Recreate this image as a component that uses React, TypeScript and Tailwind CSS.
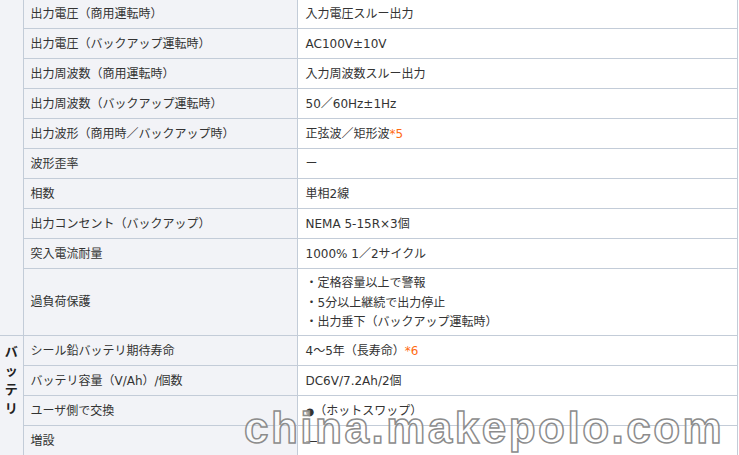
const font = "font-['DejaVu_Sans','Noto_Sans_CJK_JP',sans-serif]";

type Row = { label: string; value: React.ReactNode; tall?: boolean };

const Note = ({ n }: { n: string }) => <span className="text-[#ff6a13]">*{n}</span>;

const powerRows: Row[] = [
  { label: "出力電圧（商用運転時）", value: "入力電圧スルー出力" },
  { label: "出力電圧（バックアップ運転時）", value: "AC100V±10V" },
  { label: "出力周波数（商用運転時）", value: "入力周波数スルー出力" },
  { label: "出力周波数（バックアップ運転時）", value: "50／60Hz±1Hz" },
  { label: "出力波形（商用時／バックアップ時）", value: <>正弦波／矩形波<Note n="5" /></> },
  { label: "波形歪率", value: "ー" },
  { label: "相数", value: "単相2線" },
  { label: "出力コンセント（バックアップ）", value: "NEMA 5-15R×3個" },
  { label: "突入電流耐量", value: "1000% 1／2サイクル" },
  {
    label: "過負荷保護",
    tall: true,
    value: (
      <div className="pt-[3px] leading-[19.5px]">
        <div>・定格容量以上で警報</div>
        <div>・5分以上継続で出力停止</div>
        <div>・出力垂下（バックアップ運転時）</div>
      </div>
    ),
  },
];

const batteryRows: Row[] = [
  { label: "シール鉛バッテリ期待寿命", value: <>4～5年（長寿命）<Note n="6" /></> },
  { label: "バッテリ容量（V/Ah）/個数", value: "DC6V/7.2Ah/2個" },
  { label: "ユーザ側で交換", value: <><span className="text-[10px]">●</span>（ホットスワップ）</> },
  { label: "増設", value: "—" },
];

const cell = "border border-[#c3ccd8] px-[7px] align-middle";

export default function App() {
  return (
    <div className={`relative h-[455px] w-[739px] overflow-hidden bg-white text-[12px] text-[#333] ${font}`}>
      <table className="-mt-[2px] w-[738px] table-fixed border-collapse">
        <colgroup>
          <col className="w-[23px]" />
          <col className="w-[274px]" />
          <col />
        </colgroup>
        <tbody>
          {powerRows.map((r, i) => (
            <tr key={r.label} className={r.tall ? "h-[67px]" : "h-[30px]"}>
              {i === 0 && (
                <td rowSpan={powerRows.length} className="border-r border-[#c3ccd8] bg-[#f2f3f7]" />
              )}
              <td className={`${cell} bg-[#f2f3f7]`}>{r.label}</td>
              <td className={`${cell} pl-[8px]`}>{r.value}</td>
            </tr>
          ))}
          {batteryRows.map((r, i) => (
            <tr key={r.label} className="h-[30px]">
              {i === 0 && (
                <td
                  rowSpan={batteryRows.length + 1}
                  className="border-t border-r border-[#c3ccd8] bg-[#f2f3f7] pt-[6px] align-top text-center text-[13px] font-bold leading-[19px] text-[#222]"
                >
                  <div>バ</div>
                  <div>ッ</div>
                  <div>テ</div>
                  <div>リ</div>
                </td>
              )}
              <td className={`${cell} bg-[#f2f3f7]`}>{r.label}</td>
              <td className={`${cell} pl-[8px]`}>{r.value}</td>
            </tr>
          ))}
          <tr className="h-[30px]">
            <td className={`${cell} bg-[#f2f3f7]`}></td>
            <td className={cell}></td>
          </tr>
        </tbody>
      </table>
      <div className="pointer-events-none absolute left-[244px] top-[406px] whitespace-nowrap font-['Liberation_Sans',sans-serif] text-[44px] font-bold leading-none tracking-[2.5px] text-white/60 [-webkit-text-stroke:1.5px_#8c8c8c]">
        china.makepolo.com
      </div>
    </div>
  );
}
